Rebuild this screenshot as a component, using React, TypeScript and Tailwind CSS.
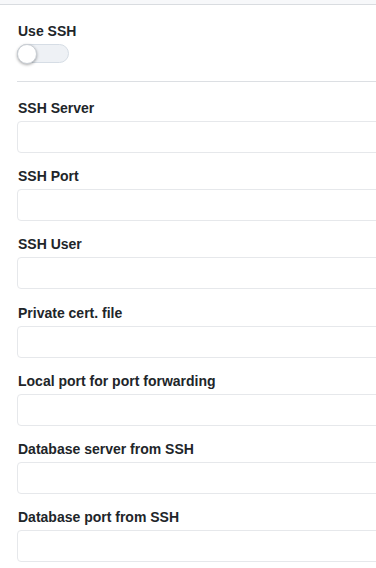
import React from "react";

const fields = [
  "SSH Server",
  "SSH Port",
  "SSH User",
  "Private cert. file",
  "Local port for port forwarding",
  "Database server from SSH",
  "Database port from SSH",
];

function Toggle() {
  return (
    <div className="relative w-[52px] h-[19px] rounded-full bg-[#eef1f5] border border-[#d6dde5]">
      <div className="absolute left-[-1px] top-[-1px] w-[20px] h-[20px] rounded-full bg-white border border-[#c9ced4] shadow-[0_1px_3px_rgba(0,0,0,0.35)]" />
    </div>
  );
}

export default function App() {
  return (
    <div
      className="w-[376px] h-[568px] overflow-hidden bg-white text-[#212529]"
      style={{ fontFamily: '"Liberation Sans", Arial, sans-serif' }}
    >
      <div className="h-[5px] bg-[#f7f8fa] border-b border-[#d9dce0]" />
      <div className="pl-[17px]">
        <div className="pt-[16px]">
          <div className="text-[14px] leading-[20px] font-bold pl-[1px]">Use SSH</div>
          <div className="mt-[3px]">
            <Toggle />
          </div>
        </div>
        <div className="mt-[18px] w-[420px] border-t border-[#dcdfe3]" />
        <div className="pt-[16px] flex flex-col gap-[13.2px]">
          {fields.map((f) => (
            <div key={f} className="flex flex-col gap-[3px]">
              <label className="text-[14px] leading-[20px] font-bold pl-[1px]">{f}</label>
              <input
                type="text"
                className="w-[420px] h-[32px] rounded-[4px] border border-[#e6e8eb] bg-white outline-none"
              />
            </div>
          ))}
        </div>
      </div>
    </div>
  );
}
